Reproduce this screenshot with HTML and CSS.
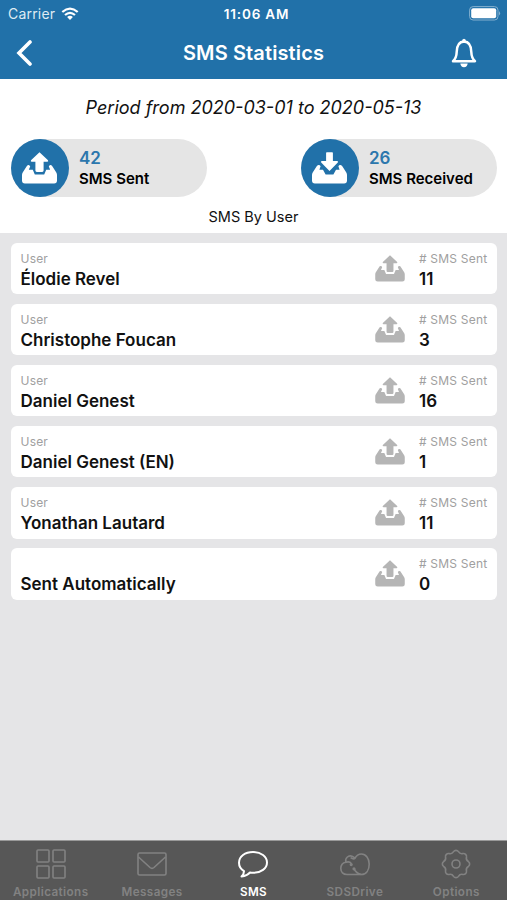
FILE: index.html
```
<!DOCTYPE html>
<html lang="en">

<head>
    <meta charset="UTF-8">
    <meta name="viewport" content="width=device-width, initial-scale=1.0">
    <title>SMS Statistics</title>
    <link rel="stylesheet" href="styles.css">
</head>

<body>
    <!-- Shared icons -->
    <svg class="sprite" width="0" height="0">
        <symbol id="tray-out" viewBox="0 0 35 32">
            <path d="M17.5 0.3 L26 8.2 Q26.8 9.7 25 9.8 H21.6 V18.6 Q21.6 20 20.2 20 H14.8 Q13.4 20 13.4 18.6 V9.8 H10 Q8.2 9.7 9 8.2 Z" />
            <path d="M6.2 13 Q7.8 12.8 8.2 14.6 L6.8 17.8 H10.8 L12.8 22.4 H22.2 L24.2 17.8 H28.2 L26.8 14.6 Q27.2 12.8 28.8 13 Q29.8 13.2 30.3 14.2 L34.3 20.4 Q35 21.6 35 23 V28.6 Q35 31.5 32.1 31.5 H2.9 Q0 31.5 0 28.6 V23 Q0 21.6 0.7 20.4 L4.7 14.2 Q5.2 13.2 6.2 13 Z" />
        </symbol>
        <symbol id="tray-in" viewBox="0 0 35 32">
            <path d="M14.1 1 Q14.1 0.3 14.8 0.3 H20.2 Q20.9 0.3 20.9 1 V9 H25 Q26.8 9.2 25.8 10.6 L17.5 19 L9.2 10.6 Q8.2 9.2 10 9 H14.1 Z" />
            <path d="M6.5 13 Q7.8 12.8 8.6 14.2 L7.4 17.8 H11 L13.6 22.4 H21.4 L24 17.8 H27.6 L26.4 14.2 Q27.2 12.8 28.5 13 Q29.8 13.2 30.3 14.2 L34.3 20.4 Q35 21.6 35 23 V28.6 Q35 31.5 32.1 31.5 H2.9 Q0 31.5 0 28.6 V23 Q0 21.6 0.7 20.4 L4.7 14.2 Q5.2 13.2 6.5 13 Z" />
        </symbol>
    </svg>

    <div class="app">
        <header class="header">
            <div class="status-bar">
                <div class="carrier">
                    <span>Carrier</span>
                    <svg class="wifi" width="18" height="14" viewBox="0 0 18 14">
                        <path d="M1.3 5 Q9 -1.8 16.7 5" />
                        <path d="M4 8 Q9 3.6 14 8" />
                        <path class="dot" d="M6.1 9.9 Q9 7.6 11.9 9.9 L9 12.9 Z" />
                    </svg>
                </div>
                <span class="time">11:06 AM</span>
                <svg class="battery" width="32" height="15" viewBox="0 0 32 15">
                    <rect class="shell" x="0.6" y="0.6" width="28.4" height="13.4" rx="3.5" />
                    <rect class="level" x="2.2" y="2.3" width="25" height="10" rx="2" />
                    <path class="level tip" d="M30 5 Q32.2 7.3 30 9.6 Z" />
                </svg>
            </div>
            <div class="nav">
                <svg class="back" width="16" height="26" viewBox="0 0 16 26">
                    <path d="M14 2 L3 13 L14 24" />
                </svg>
                <h1>SMS Statistics</h1>
                <svg class="bell" width="26" height="30" viewBox="0 0 26 30">
                    <path d="M2 23.2 Q5.5 20 5.7 14 C5.8 7 8 3.6 13 3.4 C18 3.6 20.2 7 20.3 14 Q20.5 20 24 23.2 Z" />
                    <path class="fill" d="M11 3.5 Q11 0.8 13 0.8 Q15 0.8 15 3.5 Z M9.3 25.6 H16.7 Q16.2 29.2 13 29.2 Q9.8 29.2 9.3 25.6 Z" />
                </svg>
            </div>
        </header>

        <section class="summary">
            <p class="period">Period from 2020-03-01 to 2020-05-13</p>
            <div class="totals">
                <div class="pill">
                    <div class="circle"><svg width="35" height="32"><use href="#tray-out" /></svg></div>
                    <div class="total">
                        <span class="number">42</span>
                        <span class="label">SMS Sent</span>
                    </div>
                </div>
                <div class="pill">
                    <div class="circle"><svg width="35" height="32"><use href="#tray-in" /></svg></div>
                    <div class="total">
                        <span class="number">26</span>
                        <span class="label">SMS Received</span>
                    </div>
                </div>
            </div>
            <h2>SMS By User</h2>
        </section>

        <main class="users">
            <div class="card">
                <div class="user"><small>User</small><strong>Élodie Revel</strong></div>
                <svg class="sent-icon" width="30" height="27"><use href="#tray-out" /></svg>
                <div class="count"><small># SMS Sent</small><strong>11</strong></div>
            </div>
            <div class="card">
                <div class="user"><small>User</small><strong>Christophe Foucan</strong></div>
                <svg class="sent-icon" width="30" height="27"><use href="#tray-out" /></svg>
                <div class="count"><small># SMS Sent</small><strong>3</strong></div>
            </div>
            <div class="card">
                <div class="user"><small>User</small><strong>Daniel Genest</strong></div>
                <svg class="sent-icon" width="30" height="27"><use href="#tray-out" /></svg>
                <div class="count"><small># SMS Sent</small><strong>16</strong></div>
            </div>
            <div class="card">
                <div class="user"><small>User</small><strong>Daniel Genest (EN)</strong></div>
                <svg class="sent-icon" width="30" height="27"><use href="#tray-out" /></svg>
                <div class="count"><small># SMS Sent</small><strong>1</strong></div>
            </div>
            <div class="card">
                <div class="user"><small>User</small><strong>Yonathan Lautard</strong></div>
                <svg class="sent-icon" width="30" height="27"><use href="#tray-out" /></svg>
                <div class="count"><small># SMS Sent</small><strong>11</strong></div>
            </div>
            <div class="card">
                <div class="user"><small></small><strong>Sent Automatically</strong></div>
                <svg class="sent-icon" width="30" height="27"><use href="#tray-out" /></svg>
                <div class="count"><small># SMS Sent</small><strong>0</strong></div>
            </div>
        </main>

        <nav class="tabs">
            <a class="tab">
                <svg width="32" height="32" viewBox="0 0 32 32">
                    <rect x="2" y="2" width="12" height="12" rx="1" />
                    <rect x="18" y="2" width="12" height="12" rx="1" />
                    <rect x="2" y="18" width="12" height="12" rx="1" />
                    <rect x="18" y="18" width="12" height="12" rx="1" />
                </svg>
                <span>Applications</span>
            </a>
            <a class="tab">
                <svg width="32" height="32" viewBox="0 0 32 32">
                    <rect x="2" y="5" width="28" height="22" rx="1.5" />
                    <path d="M2.5 9 L14 19.5 Q16 21.2 18 19.5 L29.5 9" />
                </svg>
                <span>Messages</span>
            </a>
            <a class="tab active">
                <svg width="32" height="32" viewBox="0 0 32 32">
                    <path d="M7 23.2 C3.8 21.2 2 18.4 2 14.8 C2 8.4 8 4 16 4 C24 4 30 8.4 30 14.4 C30 20.4 24 24.8 16 24.8 Q14.4 24.8 13 24.5 Q10.2 27.8 4.5 28.4 Q7 26 7 23.2 Z" />
                </svg>
                <span>SMS</span>
            </a>
            <a class="tab">
                <svg width="32" height="32" viewBox="0 0 32 32">
                    <path d="M8 26.5 C4.2 26.5 1.8 24 1.8 20.6 C1.8 17.2 4 14.6 7 14.2 C5.6 10.2 9.4 7 13 8.2 Q15 9 15.9 10.4 C17.4 7.4 19.4 6 22.4 6 C27 6 30.2 10.4 30.2 16 C30.2 22 27.4 26.5 22.4 26.5 Z" />
                    <path d="M7 14.2 Q12.2 13 12.4 17 M11.6 9.6 Q14.4 11.6 15.9 10.4 M15 20.6 Q17 25.4 22.4 26.5" />
                    <circle cx="12.2" cy="16.6" r="0.8" />
                    <circle cx="15" cy="20.8" r="0.8" />
                </svg>
                <span>SDSDrive</span>
            </a>
            <a class="tab">
                <svg width="32" height="32" viewBox="0 0 32 32">
                    <path d="M28.36 13.54 A3 3 0 0 1 28.36 18.46 A4 4 0 0 0 26.48 23 A3 3 0 0 1 23 26.48 A4 4 0 0 0 18.46 28.36 A3 3 0 0 1 13.54 28.36 A4 4 0 0 0 9 26.48 A3 3 0 0 1 5.52 23 A4 4 0 0 0 3.64 18.46 A3 3 0 0 1 3.64 13.54 A4 4 0 0 0 5.52 9 A3 3 0 0 1 9 5.52 A4 4 0 0 0 13.54 3.64 A3 3 0 0 1 18.46 3.64 A4 4 0 0 0 23 5.52 A3 3 0 0 1 26.48 9 A4 4 0 0 0 28.36 13.54 Z" />
                    <circle cx="16" cy="16" r="4" />
                </svg>
                <span>Options</span>
            </a>
        </nav>
    </div>
</body>

</html>
```
FILE: styles.css
```
* {
    box-sizing: border-box;
}

body {
    margin: 0;
    font-family: Inter, "Liberation Sans", sans-serif;
    color: #111;
    background: #e5e5e7;
}

.sprite {
    position: absolute;
}

.app {
    display: flex;
    flex-direction: column;
    height: 100vh;
    overflow: hidden;
}

/* Header */
.header {
    height: 79px;
    flex: none;
    background: #2171a9;
    color: #fff;
}

.status-bar {
    display: grid;
    grid-template-columns: 1fr auto 1fr;
    align-items: center;
    height: 27px;
    padding: 0 6px 0 8px;
    font-size: 13.5px;
}

.carrier {
    display: flex;
    align-items: center;
    gap: 6px;
    color: #dfebf3;
    font-size: 14px;
    letter-spacing: 0.2px;
}

.wifi path {
    fill: none;
    stroke: #fff;
    stroke-width: 2.2;
}

.wifi .dot {
    fill: #fff;
    stroke: none;
}

.time {
    padding-left: 4px;
    font-weight: 600;
    letter-spacing: 0.8px;
}

.battery {
    justify-self: end;
}

.battery .shell {
    fill: none;
    stroke: #84b0cf;
    stroke-width: 1;
}

.battery .level {
    fill: #fff;
}

.battery .tip {
    fill: #84b0cf;
}

.nav {
    display: grid;
    grid-template-columns: 1fr auto 1fr;
    align-items: center;
    height: 51px;
    padding: 0 30px 0 16px;
}

.nav h1 {
    margin: 0;
    padding-left: 14px;
    font-size: 20px;
    font-weight: 600;
    letter-spacing: 0.12px;
}

.back path {
    fill: none;
    stroke: #fff;
    stroke-width: 3.6;
    stroke-linecap: round;
}

.bell {
    justify-self: end;
}

.bell path {
    fill: none;
    stroke: #fff;
    stroke-width: 2.5;
    stroke-linejoin: round;
}

.bell .fill {
    fill: #fff;
    stroke: none;
}

/* Period and totals */
.summary {
    height: 154px;
    flex: none;
    background: #fff;
    text-align: center;
}

.period {
    margin: 0;
    padding-top: 17px;
    font-size: 18px;
    font-style: italic;
    line-height: 24px;
}

.totals {
    display: flex;
    justify-content: space-between;
    padding: 19px 10px 0 11px;
}

.pill {
    display: flex;
    gap: 10px;
    width: 196px;
    height: 58px;
    border-radius: 29px;
    background: #e5e5e5;
    text-align: left;
}

.circle {
    display: flex;
    align-items: center;
    justify-content: center;
    width: 58px;
    height: 58px;
    padding-right: 2px;
    border-radius: 50%;
    background: #2171a9;
    fill: #fff;
}

.total {
    display: flex;
    flex-direction: column;
    padding-top: 9px;
    font-weight: 600;
}

.number {
    color: #2c77ad;
    font-size: 17px;
    line-height: 21px;
}

.label {
    color: #000;
    font-size: 15px;
    line-height: 20px;
}

.summary h2 {
    margin: 9px 0 0;
    font-size: 14.5px;
    font-weight: 400;
    line-height: 22px;
}

/* User list */
.users {
    display: flex;
    flex: 1;
    flex-direction: column;
    gap: 9.6px;
    padding: 9.7px 10px 0 10.5px;
}

.card {
    display: flex;
    height: 51.5px;
    padding: 7px 0 0 10px;
    border-radius: 6px;
    background: #fff;
}

.user,
.count {
    display: flex;
    flex-direction: column;
}

.user {
    flex: 1;
}

.count {
    width: 78px;
}

.card small {
    height: 17px;
    color: #a0a0a0;
    font-size: 12px;
    line-height: 17px;
    letter-spacing: 0.2px;
    white-space: nowrap;
}

.card strong {
    font-size: 17px;
    font-weight: 600;
    line-height: 24px;
}

.sent-icon {
    margin: 5px 14px 0 0;
    fill: #b5b5b5;
}

/* Bottom tabs */
.tabs {
    display: grid;
    grid-template-columns: repeat(5, 1fr);
    height: 60px;
    flex: none;
    border-top: 1px solid #999;
    background: #575757;
}

.tab {
    display: flex;
    flex-direction: column;
    align-items: center;
    padding-top: 7px;
    color: #828282;
    font-size: 11.7px;
    font-weight: 600;
    line-height: 16px;
    letter-spacing: 0.4px;
}

.tab svg {
    margin-bottom: 4px;
    fill: none;
    stroke: currentColor;
    stroke-width: 1.6;
    stroke-linejoin: round;
}

.tab.active {
    color: #fff;
}

.tab.active svg {
    stroke-width: 2;
}
```
